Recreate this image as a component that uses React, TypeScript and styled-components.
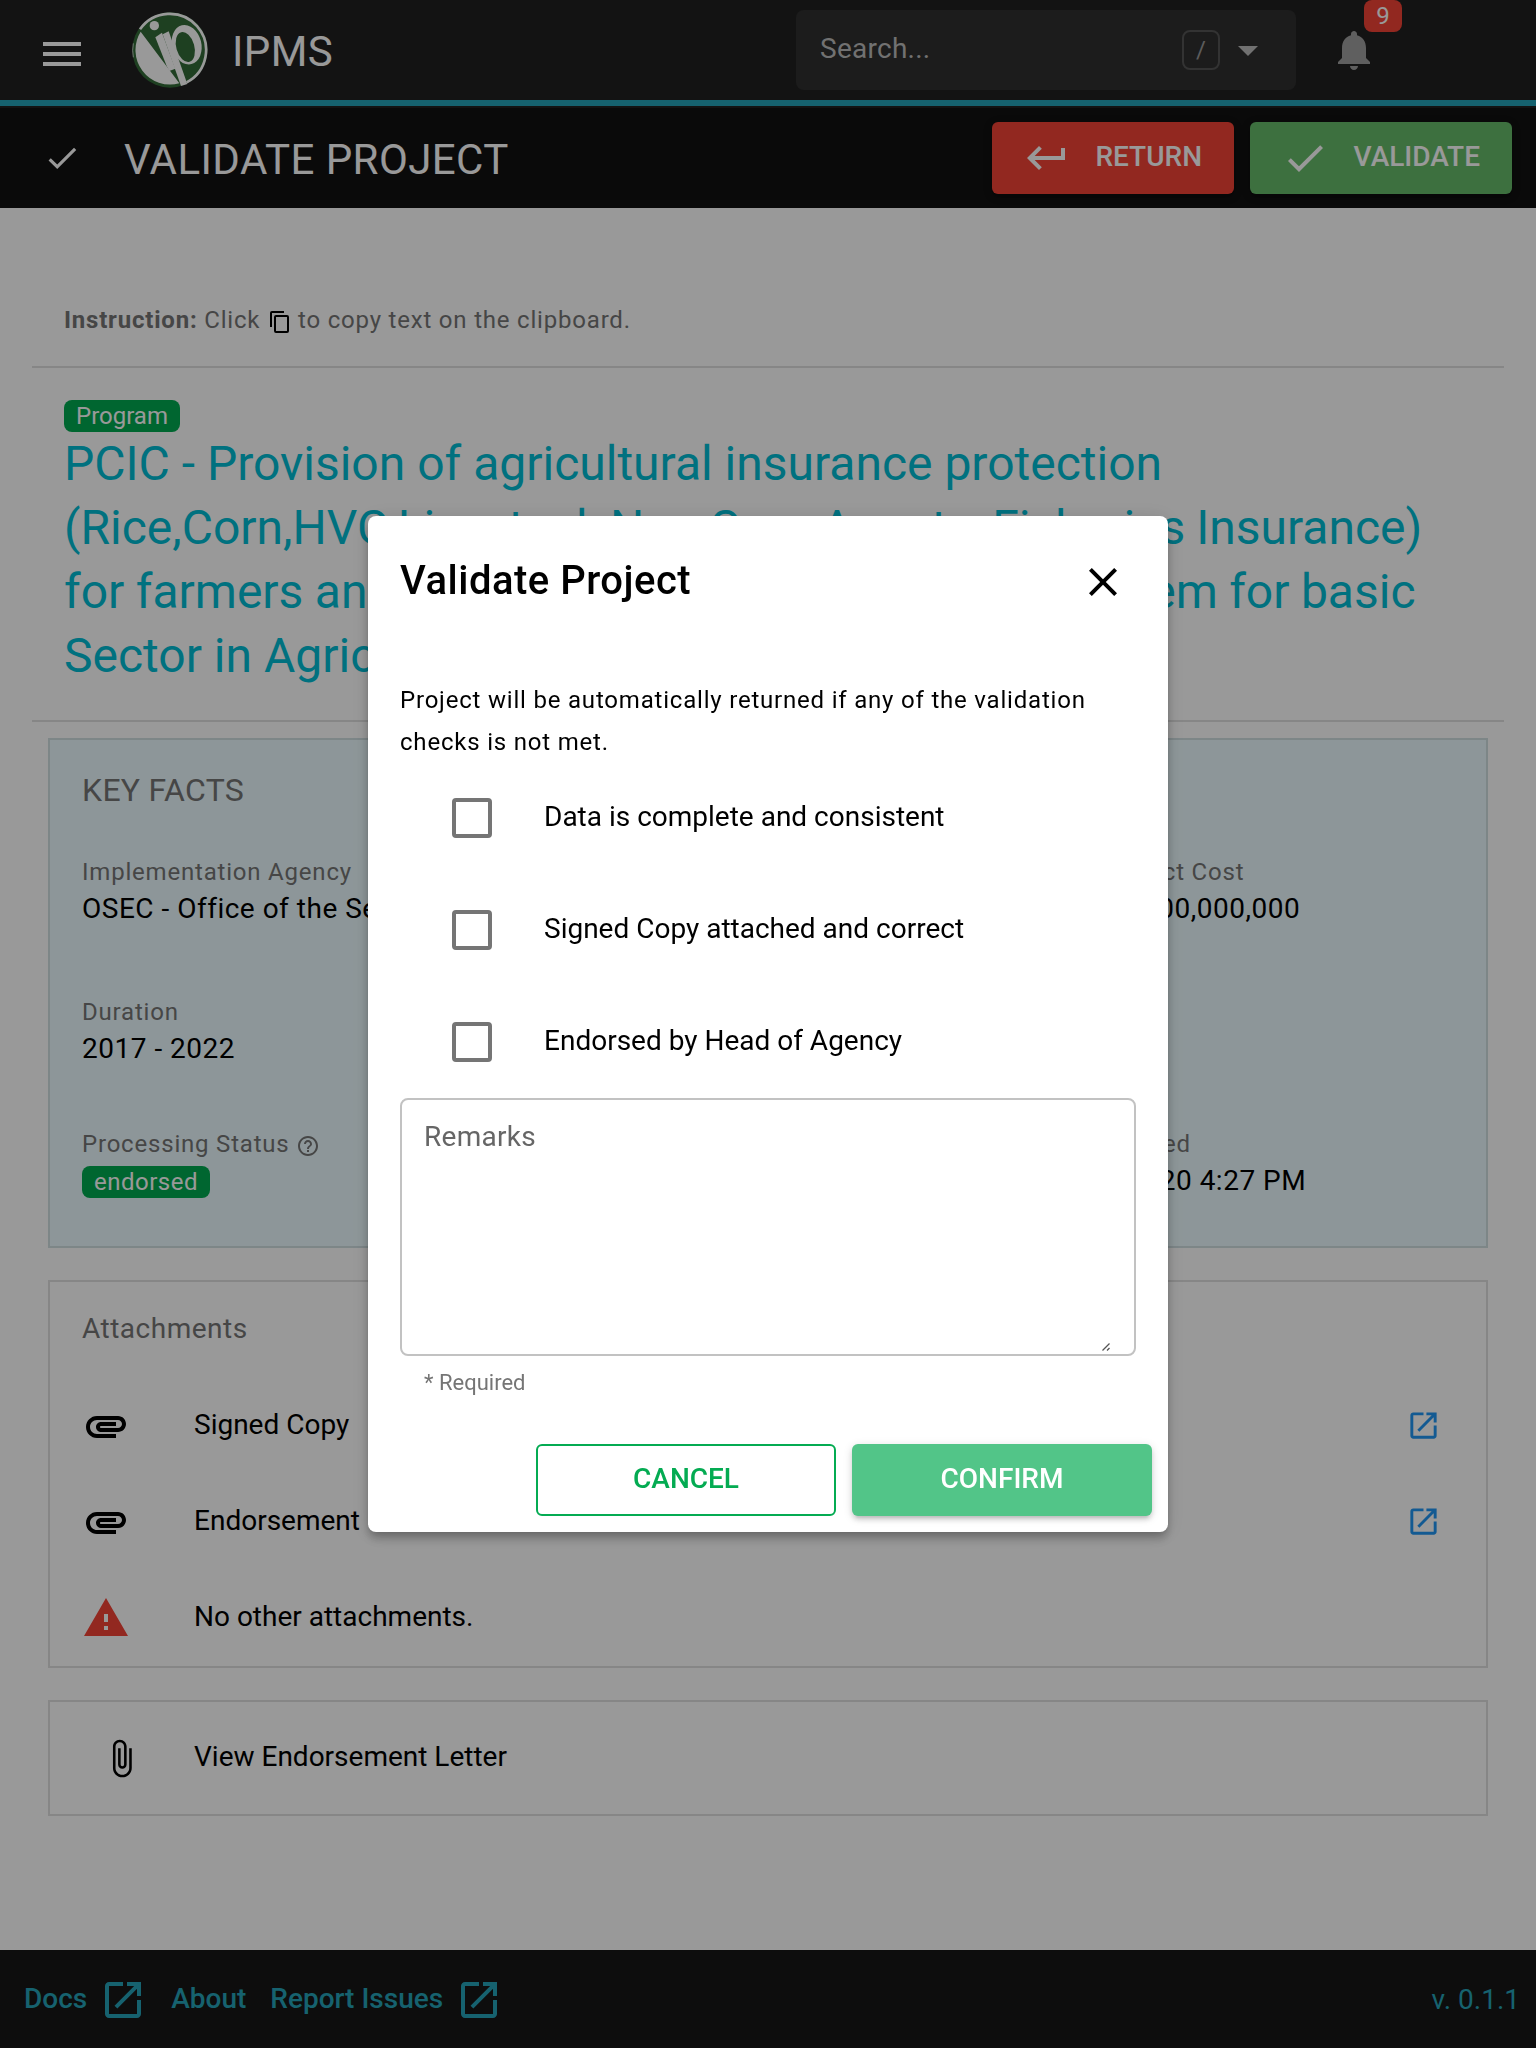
import React from "react";
import styled, { createGlobalStyle } from "styled-components";

const GlobalStyle = createGlobalStyle`
  *, *::before, *::after { box-sizing: border-box; }
  html, body { margin: 0; padding: 0; }
  body {
    width: 1536px;
    height: 2048px;
    overflow: hidden;
    background: #fff;
    color: #000;
    font-family: Roboto, "Liberation Sans", sans-serif;
    font-size: 28px;
    line-height: 1.5;
    -webkit-font-smoothing: antialiased;
  }
  button, a { font: inherit; color: inherit; text-decoration: none; }
`;

const paths = {
  check: "M21,7L9,19L3.5,13.5L4.91,12.09L9,16.17L19.59,5.59L21,7Z",
  enter:
    "M19,7V11H5.83L9.41,7.41L8,6L2,12L8,18L9.41,16.58L5.83,13H21V7H19Z",
  bell: "M12 22c1.1 0 2-.9 2-2h-4c0 1.1.89 2 2 2zm6-6v-5c0-3.07-1.64-5.64-4.5-6.32V4c0-.83-.67-1.5-1.5-1.5s-1.5.67-1.5 1.5v.68C7.63 5.36 6 7.92 6 11v5l-2 2v1h16v-1l-2-2z",
  caret: "M7 10l5 5 5-5z",
  copy: "M19,21H8V7H19M19,5H8A2,2 0 0,0 6,7V21A2,2 0 0,0 8,23H19A2,2 0 0,0 21,21V7A2,2 0 0,0 19,5M16,1H4A2,2 0 0,0 2,3V17H4V3H16V1Z",
  help: "M11 18h2v-2h-2v2zm1-16C6.48 2 2 6.48 2 12s4.48 10 10 10 10-4.48 10-10S17.52 2 12 2zm0 18c-4.41 0-8-3.59-8-8s3.59-8 8-8 8 3.59 8 8-3.59 8-8 8zm0-14c-2.21 0-4 1.79-4 4h2c0-1.1.9-2 2-2s2 .9 2 2c0 2-3 1.75-3 5h2c0-2.25 3-2.5 3-5 0-2.21-1.79-4-4-4z",
  attachment:
    "M2 12.5C2 9.46 4.46 7 7.5 7H18c2.21 0 4 1.79 4 4s-1.79 4-4 4H9.5C8.12 15 7 13.88 7 12.5S8.12 10 9.5 10H17v2H9.41c-.55 0-.55 1 0 1H18c1.1 0 2-.9 2-2s-.9-2-2-2H7.5C5.57 9 4 10.57 4 12.5S5.57 16 7.5 16H17v2H7.5C4.46 18 2 15.54 2 12.5z",
  warning: "M1 21h22L12 2 1 21zm12-3h-2v-2h2v2zm0-4h-2v-4h2v4z",
  clip: "M16.5 6v11.5c0 2.21-1.79 4-4 4s-4-1.79-4-4V5c0-1.38 1.12-2.5 2.5-2.5s2.5 1.12 2.5 2.5v10.5c0 .55-.45 1-1 1s-1-.45-1-1V6H10v9.5c0 1.38 1.12 2.5 2.5 2.5s2.5-1.12 2.5-2.5V5c0-2.21-1.79-4-4-4S7 2.79 7 5v12.5c0 3.04 2.46 5.5 5.5 5.5s5.5-2.46 5.5-5.5V6h-1.5z",
  launch:
    "M19 19H5V5h7V3H5c-1.11 0-2 .9-2 2v14c0 1.1.89 2 2 2h14c1.1 0 2-.9 2-2v-7h-2v7zM14 3v2h3.59l-9.83 9.83 1.41 1.41L19 6.41V10h2V3h-7z",
  close:
    "M19,6.41L17.59,5L12,10.59L6.41,5L5,6.41L10.59,12L5,17.59L6.41,19L12,13.41L17.59,19L19,17.59L13.41,12L19,6.41Z",
};

const Svg = styled.svg<{ $size: number }>`
  display: block;
  flex: none;
  width: ${(p) => p.$size}px;
  height: ${(p) => p.$size}px;
  fill: currentColor;
`;

function Icon({ name, size = 48 }: { name: keyof typeof paths; size?: number }) {
  return (
    <Svg $size={size} viewBox="0 0 24 24" aria-hidden="true">
      <path d={paths[name]} />
    </Svg>
  );
}

const Page = styled.div`
  display: flex;
  flex-direction: column;
  width: 1536px;
  height: 2048px;
`;

/* ---------- top bar ---------- */

const TopBar = styled.header`
  display: flex;
  align-items: center;
  height: 108px;
  padding: 0 0 8px 43px;
  background: linear-gradient(#26a3b9, #26a3b9) 0 100px / 100% 6px no-repeat #212121;
  color: #fff;
`;

const Menu = styled.div`
  display: flex;
  flex-direction: column;
  justify-content: space-between;
  width: 38px;
  height: 24px;
  margin-top: 8px;
`;

const MenuLine = styled.span`
  height: 4px;
  background: #fff;
`;

const Logo = styled.svg`
  width: 76px;
  height: 76px;
  margin-left: 51px;
`;

const Brand = styled.div`
  flex: 1;
  padding: 3px 0 0 24px;
  font-size: 42px;
  letter-spacing: 0.01em;
  line-height: 64px;
`;

const SearchBox = styled.div`
  display: flex;
  align-items: center;
  width: 500px;
  height: 80px;
  padding: 0 24px;
  border-radius: 8px;
  background: #2f2f2f;
  color: #bdbdbd;
`;

const SearchHint = styled.span`
  flex: 1;
  padding-bottom: 2px;
  line-height: 48px;
  letter-spacing: 0.00937em;
`;

const Key = styled.kbd`
  display: flex;
  align-items: center;
  justify-content: center;
  width: 38px;
  height: 40px;
  border: 2px solid #555;
  border-radius: 8px;
  font: 24px Roboto, sans-serif;
  color: #999;
`;

const Caret = styled.div`
  margin: 0 0 0 4px;
`;

const Notifications = styled.div`
  position: relative;
  margin: 0 158px 0 34px;
  color: #9e9e9e;
`;

const Count = styled.span`
  position: absolute;
  left: 34px;
  top: -26px;
  width: 38px;
  height: 32px;
  border-radius: 8px;
  background: #f44336;
  color: #fff;
  font-size: 24px;
  line-height: 32px;
  text-align: center;
`;

/* ---------- action bar ---------- */

const ActionBar = styled.div`
  display: flex;
  align-items: center;
  height: 100px;
  padding: 0 24px 0 43px;
  background: #111;
  color: #fff;
`;

const ActionTitle = styled.h1`
  flex: 1;
  margin: 0;
  padding: 3px 0 0 43px;
  font-size: 42px;
  font-weight: 400;
  letter-spacing: 0.01em;
  line-height: 64px;
`;

const ActionButton = styled.button<{ $color: string; $width: number }>`
  display: flex;
  align-items: center;
  justify-content: space-between;
  width: ${(p) => p.$width}px;
  height: 72px;
  margin-left: 16px;
  padding: 0 32px 0 31px;
  border: 0;
  border-radius: 6px;
  background: ${(p) => p.$color};
  color: #fff;
  font-weight: 500;
  box-shadow: 0 2px 10px rgba(0, 0, 0, 0.2), 0 4px 4px rgba(0, 0, 0, 0.14);
`;

const ButtonText = styled.span`
  padding-bottom: 2px;
  line-height: 48px;
`;

/* ---------- content ---------- */

const Main = styled.main`
  flex: 1;
  padding: 93px 32px 0;
`;

const Instruction = styled.p`
  display: flex;
  align-items: center;
  height: 67px;
  margin: 0;
  padding: 0 32px 27px;
  border-bottom: 2px solid #e0e0e0;
  color: #757575;
  font-size: 24px;
  line-height: 40px;
  letter-spacing: 0.0333em;
  white-space: pre;
`;

const InlineIcon = styled.span`
  margin: 3px 6px 0 1px;
  color: #000;
`;

const Heading = styled.section`
  padding: 32px;
  border-bottom: 2px solid #e0e0e0;
`;

const Tag = styled.span<{ $spaced?: boolean }>`
  display: block;
  width: fit-content;
  height: 32px;
  margin-top: ${(p) => (p.$spaced ? 2 : 0)}px;
  padding: 0 12px;
  border-radius: 8px;
  background: #00aa50;
  color: #fff;
  font-size: 24px;
  line-height: 32px;
  letter-spacing: ${(p) => (p.$spaced ? "0.5px" : "0")};
`;

const ProjectTitle = styled.h2`
  margin: 0;
  color: #00bcd4;
  font-size: 48px;
  font-weight: 400;
  line-height: 64px;
  white-space: nowrap;
`;

const TitleLine = styled.span<{ $wordGap?: number }>`
  display: block;
  word-spacing: ${(p) => p.$wordGap ?? 0}px;
`;

const Card = styled.section<{ $height: number; $top: number; $tint?: boolean }>`
  height: ${(p) => p.$height}px;
  margin: ${(p) => p.$top}px 16px 0;
  border: 2px solid ${(p) => (p.$tint ? "#d0dfe2" : "#e0e0e0")};
  background: ${(p) => (p.$tint ? "#ecfbff" : "#fff")};
`;

const FactsTitle = styled.h3`
  height: 112px;
  margin: 0;
  padding: 30px 32px 0;
  color: #757575;
  font-size: 32px;
  font-weight: 400;
  line-height: 40px;
  letter-spacing: 0.00937em;
`;

const FactsRow = styled.div<{ $height: number }>`
  display: grid;
  grid-template-columns: repeat(3, 1fr);
  height: ${(p) => p.$height}px;
`;

const Fact = styled.div`
  padding: 0 0 0 32px;
  white-space: nowrap;
  letter-spacing: 0.01786em;
`;

const FactLabel = styled.div`
  display: flex;
  align-items: center;
  gap: 6px;
  height: 40px;
  color: #757575;
  font-size: 24px;
  line-height: 40px;
  letter-spacing: 0.0333em;

  svg { margin-top: 4px; }
`;

const FactValue = styled.div`
  line-height: 34px;
`;

const ListHeader = styled.h3`
  height: 96px;
  margin: 0;
  padding: 23px 32px 0;
  color: #757575;
  font-size: 28px;
  font-weight: 400;
  line-height: 48px;
  letter-spacing: 0.01786em;
`;

const Item = styled.div<{ $height?: number; $inset?: number }>`
  display: flex;
  align-items: center;
  height: ${(p) => p.$height ?? 96}px;
  padding: 0 45px 0 ${(p) => p.$inset ?? 32}px;
`;

const ItemIcon = styled.span<{ $color?: string; $width?: number }>`
  width: ${(p) => p.$width ?? 112}px;
  color: ${(p) => p.$color ?? "#000"};
`;

const ItemText = styled.span`
  flex: 1;
  padding-bottom: 3px;
`;

const OpenLink = styled.a`
  padding-bottom: 2px;
  color: #2196f3;
`;

/* ---------- footer ---------- */

const Footer = styled.footer`
  display: flex;
  align-items: center;
  gap: 24px;
  height: 98px;
  padding: 2px 16px 0 24px;
  background: #161616;
  color: #26a3b9;
`;

const FooterLink = styled.a`
  display: flex;
  align-items: center;
  gap: 12px;
  font-weight: 500;
`;

const FooterText = styled.span`
  padding-bottom: 3px;
`;

const Version = styled.span`
  margin-left: auto;
`;

/* ---------- dialog ---------- */

const Backdrop = styled.div`
  position: fixed;
  inset: 0;
  display: flex;
  align-items: center;
  justify-content: center;
  background: rgba(0, 0, 0, 0.4);
`;

const Dialog = styled.div`
  width: 800px;
  height: 1016px;
  padding: 33px 32px 0;
  border-radius: 8px;
  background: #fff;
  box-shadow: 0 4px 8px -2px rgba(0, 0, 0, 0.2), 0 8px 10px rgba(0, 0, 0, 0.14),
    0 2px 20px rgba(0, 0, 0, 0.12);
`;

const DialogHeader = styled.div`
  display: flex;
  align-items: center;
  justify-content: space-between;
  height: 64px;
  padding-right: 9px;
  font-size: 40px;
  font-weight: 500;
  letter-spacing: 0.0125em;
  line-height: 64px;

  svg { margin-top: 2px; }
`;

const Note = styled.p`
  height: 83px;
  margin: 66px 0 0;
  font-size: 24px;
  line-height: 42px;
  letter-spacing: 0.0333em;
`;

const Option = styled.label`
  display: flex;
  align-items: center;
  gap: 52px;
  height: 112px;
  padding-left: 52px;
`;

const Box = styled.span`
  width: 40px;
  height: 40px;
  border: 4px solid #757575;
  border-radius: 4px;
`;

const OptionText = styled.span`
  padding-bottom: 2px;
`;

const Remarks = styled.div`
  display: flex;
  justify-content: space-between;
  height: 258px;
  padding: 13px 23px 3px 22px;
  border: 2px solid #c2c2c2;
  border-radius: 8px;
  color: #666;
  letter-spacing: 0.00937em;
  line-height: 48px;
`;

const Grip = styled.svg`
  align-self: flex-end;
  width: 9px;
  height: 8px;
`;

const Hint = styled.div`
  height: 88px;
  padding: 11px 24px 0;
  color: #757575;
  font-size: 22px;
  line-height: 32px;
`;

const DialogActions = styled.div`
  display: flex;
  justify-content: flex-end;
  gap: 16px;
  margin-right: -16px;
`;

const DialogButton = styled.button<{ $solid?: boolean }>`
  width: 300px;
  height: 72px;
  padding: 0 0 2px;
  border: ${(p) => (p.$solid ? "0" : "2px solid #04ab52")};
  border-radius: 6px;
  background: ${(p) => (p.$solid ? "#52c588" : "#fff")};
  color: ${(p) => (p.$solid ? "#fff" : "#04ab52")};
  font-weight: 500;
  box-shadow: ${(p) =>
    p.$solid
      ? "0 2px 10px rgba(0,0,0,.14), 0 4px 4px rgba(0,0,0,.1), 0 6px 2px -4px rgba(0,0,0,.08)"
      : "none"};
`;

const options = [
  "Data is complete and consistent",
  "Signed Copy attached and correct",
  "Endorsed by Head of Agency",
];

function BrandLogo() {
  return (
    <Logo viewBox="396 36 228 228" aria-hidden="true">
      <circle cx="510" cy="150" r="113" fill="#336b38" />
      <path
        d="M420 88 A109 109 0 1 1 560 247"
        fill="none"
        stroke="#fff"
        strokeWidth="8"
      />
      <path
        d="M400 130 A112 112 0 0 0 400 172"
        fill="none"
        stroke="#fff"
        strokeWidth="2"
      />
      <path d="M422 95 L510 212 L538 250 A104 104 0 0 1 422 95 Z" fill="#fff" />
      <circle cx="463" cy="77" r="14" fill="#fff" />
      <path d="M466 112 L486 98 L526 206 L508 213 L500 198 Z" fill="#fff" />
      <ellipse
        cx="560"
        cy="134"
        rx="44"
        ry="60"
        transform="rotate(-14 560 134)"
        fill="#fff"
      />
      <ellipse
        cx="556"
        cy="141"
        rx="27"
        ry="46"
        transform="rotate(-16 556 141)"
        fill="#336b38"
      />
      <path d="M488 103 L506 94 L562 252 L543 258 Z" fill="#fff" />
    </Logo>
  );
}

export default function App() {
  return (
    <>
      <GlobalStyle />
      <Page>
        <TopBar>
          <Menu>
            <MenuLine />
            <MenuLine />
            <MenuLine />
          </Menu>
          <BrandLogo />
          <Brand>IPMS</Brand>
          <SearchBox>
            <SearchHint>Search...</SearchHint>
            <Key>/</Key>
            <Caret>
              <Icon name="caret" />
            </Caret>
          </SearchBox>
          <Notifications>
            <Icon name="bell" />
            <Count>9</Count>
          </Notifications>
        </TopBar>

        <ActionBar>
          <Icon name="check" size={38} />
          <ActionTitle>VALIDATE PROJECT</ActionTitle>
          <ActionButton $color="#f44336" $width={242}>
            <Icon name="enter" />
            <ButtonText>RETURN</ButtonText>
          </ActionButton>
          <ActionButton $color="#66bb6a" $width={262}>
            <Icon name="check" />
            <ButtonText>VALIDATE</ButtonText>
          </ActionButton>
        </ActionBar>

        <Main>
          <Instruction>
            <b>Instruction:</b> Click{" "}
            <InlineIcon>
              <Icon name="copy" size={24} />
            </InlineIcon>
            to copy text on the clipboard.
          </Instruction>

          <Heading>
            <Tag>Program</Tag>
            <ProjectTitle>
              <TitleLine>
                PCIC - Provision of agricultural insurance protection
              </TitleLine>
              <TitleLine $wordGap={-1}>
                (Rice,Corn,HVC,Livestock,Non Crop Agents, Fisheries Insurance)
              </TitleLine>
              <TitleLine $wordGap={-0.5}>
                for farmers and fisherfolk listed in the Registry System for basic
              </TitleLine>
              <TitleLine>Sector in Agriculture</TitleLine>
            </ProjectTitle>
          </Heading>

          <Card $top={16} $height={510} $tint>
            <FactsTitle>KEY FACTS</FactsTitle>
            <FactsRow $height={140}>
              <Fact>
                <FactLabel>Implementation Agency</FactLabel>
                <FactValue>OSEC - Office of the Secretary</FactValue>
              </Fact>
              <Fact />
              <Fact>
                <FactLabel>Total Project Cost</FactLabel>
                <FactValue>PHP 22,500,000,000</FactValue>
              </Fact>
            </FactsRow>
            <FactsRow $height={132}>
              <Fact>
                <FactLabel>Duration</FactLabel>
                <FactValue>2017 - 2022</FactValue>
              </Fact>
            </FactsRow>
            <FactsRow $height={100}>
              <Fact>
                <FactLabel>
                  Processing Status
                  <Icon name="help" size={24} />
                </FactLabel>
                <Tag $spaced>endorsed</Tag>
              </Fact>
              <Fact />
              <Fact>
                <FactLabel>Last Updated</FactLabel>
                <FactValue>Aug 1, 2020 4:27 PM</FactValue>
              </Fact>
            </FactsRow>
          </Card>

          <Card $top={32} $height={388}>
            <ListHeader>Attachments</ListHeader>
            <Item>
              <ItemIcon>
                <Icon name="attachment" />
              </ItemIcon>
              <ItemText>Signed Copy</ItemText>
              <OpenLink>
                <Icon name="launch" size={35} />
              </OpenLink>
            </Item>
            <Item>
              <ItemIcon>
                <Icon name="attachment" />
              </ItemIcon>
              <ItemText>Endorsement</ItemText>
              <OpenLink>
                <Icon name="launch" size={35} />
              </OpenLink>
            </Item>
            <Item>
              <ItemIcon $color="#f44336">
                <Icon name="warning" />
              </ItemIcon>
              <ItemText>No other attachments.</ItemText>
            </Item>
          </Card>

          <Card $top={32} $height={116}>
            <Item $height={112} $inset={51}>
              <ItemIcon $width={93}>
                <Icon name="clip" size={41} />
              </ItemIcon>
              <ItemText>View Endorsement Letter</ItemText>
            </Item>
          </Card>
        </Main>

        <Footer>
          <FooterLink>
            <FooterText>Docs</FooterText>
            <Icon name="launch" />
          </FooterLink>
          <FooterLink>
            <FooterText>About</FooterText>
          </FooterLink>
          <FooterLink>
            <FooterText>Report Issues</FooterText>
            <Icon name="launch" />
          </FooterLink>
          <Version>v. 0.1.1</Version>
        </Footer>
      </Page>

      <Backdrop>
        <Dialog role="dialog" aria-label="Validate Project">
          <DialogHeader>
            Validate Project
            <Icon name="close" />
          </DialogHeader>
          <Note>
            Project will be automatically returned if any of the validation
            checks is not met.
          </Note>
          {options.map((label) => (
            <Option key={label}>
              <Box />
              <OptionText>{label}</OptionText>
            </Option>
          ))}
          <Remarks>
            Remarks
            <Grip viewBox="0 0 9 8" aria-hidden="true">
              <path
                d="M0.5 7.5 L7.5 0.5 M5 7.5 L7.5 5"
                stroke="#555"
                strokeWidth="1.3"
                fill="none"
              />
            </Grip>
          </Remarks>
          <Hint>* Required</Hint>
          <DialogActions>
            <DialogButton>CANCEL</DialogButton>
            <DialogButton $solid>CONFIRM</DialogButton>
          </DialogActions>
        </Dialog>
      </Backdrop>
    </>
  );
}
